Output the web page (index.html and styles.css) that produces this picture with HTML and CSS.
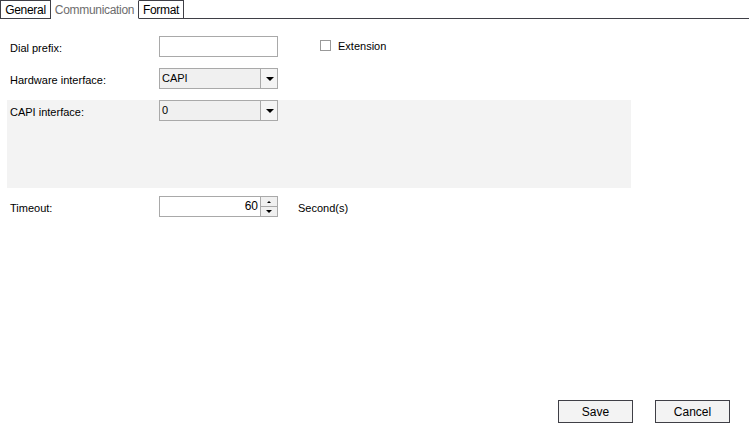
FILE: index.html
```html
<!DOCTYPE html>
<html lang="en">
<head>
  <meta charset="UTF-8">
  <title>Communication settings</title>
  <link rel="stylesheet" href="styles.css">
</head>
<body>
  <div class="page">
    <div class="tabs">
      <div class="tab tab-general">General</div>
      <div class="tab tab-comm active">Communication</div>
      <div class="tab tab-format">Format</div>
      <div class="tab-fill"></div>
    </div>

    <div class="form">
      <div class="row row-first">
        <label class="label">Dial prefix:</label>
        <input class="textbox" type="text">
        <div class="check">
          <span class="box"></span>
          <span>Extension</span>
        </div>
      </div>

      <div class="row">
        <label class="label">Hardware interface:</label>
        <div class="combo">
          <span class="combo-value">CAPI</span>
          <span class="combo-btn"><span class="arrow"></span></span>
        </div>
      </div>

      <div class="panel">
        <label class="label">CAPI interface:</label>
        <div class="combo">
          <span class="combo-value">0</span>
          <span class="combo-btn"><span class="arrow"></span></span>
        </div>
      </div>

      <div class="row row-timeout">
        <label class="label">Timeout:</label>
        <div class="spin">
          <span class="spin-value">60</span>
          <span class="spin-btns">
            <span class="spin-up"><span class="tri-up"></span></span>
            <span class="spin-down"><span class="tri-down"></span></span>
          </span>
        </div>
        <span class="unit">Second(s)</span>
      </div>
    </div>

    <div class="actions">
      <button class="btn" type="button">Save</button>
      <button class="btn" type="button">Cancel</button>
    </div>
  </div>
</body>
</html>
```

FILE: styles.css
```css
body {
  margin: 0;
  font-family: 'Liberation Sans', Arial, sans-serif;
  font-size: 11px;
  color: #000;
  background: #fff;
}

.page {
  height: 437px;
  display: flex;
  flex-direction: column;
}

/* tab strip */
.tabs {
  display: flex;
  height: 19px;
}

.tab {
  height: 19px;
  line-height: 18px;
  text-align: center;
  border: 1px solid #3f3f46;
  box-sizing: border-box;
  background: #fff;
  font-size: 12px;
  letter-spacing: -0.3px;
}

.tab + .tab {
  border-left: none;
}

.tab-general {
  width: 51px;
}

.tab-comm {
  width: 88px;
}

.tab-format {
  width: 45px;
}

.tab.active {
  color: #6d6d6d;
  border-color: transparent;
  border-right: 1px solid #3f3f46;
}

.tab-fill {
  flex: 1;
  border-bottom: 1px solid #3f3f46;
}

/* form rows */
.form {
  display: flex;
  flex-direction: column;
}

.row {
  display: flex;
  align-items: center;
  height: 21px;
  padding-left: 10px;
  margin-bottom: 11px;
}

.row-first {
  margin-top: 17px;
}

.label {
  width: 149px;
  flex: none;
  padding-top: 2px;
}

.textbox {
  width: 119px;
  height: 21px;
  margin: 0;
  padding: 0 3px;
  border: 1px solid #a9a9a9;
  box-sizing: border-box;
  font: inherit;
}

.check {
  display: flex;
  align-items: center;
  margin-left: 42px;
  margin-top: -2px;
}

.box {
  width: 11px;
  height: 11px;
  border: 1px solid #999;
  box-sizing: border-box;
  margin-right: 7px;
}

.combo {
  display: flex;
  width: 119px;
  height: 21px;
  border: 1px solid #a9a9a9;
  box-sizing: border-box;
  background: #f0f0f0;
}

.combo-value {
  flex: 1;
  padding-left: 2px;
  line-height: 19px;
}

.combo-btn {
  width: 16px;
  border-left: 1px solid #a9a9a9;
  background: #f4f4f4;
  display: flex;
  align-items: center;
  justify-content: center;
}

.arrow {
  width: 0;
  height: 0;
  border-left: 4px solid transparent;
  border-right: 4px solid transparent;
  border-top: 4px solid #000;
  margin-left: 1px;
}

/* grey group panel */
.panel {
  display: flex;
  align-items: flex-start;
  margin-left: 7px;
  width: 624px;
  height: 88px;
  padding-left: 3px;
  box-sizing: border-box;
  background: #f3f3f3;
  margin-bottom: 8px;
}

.panel .label {
  line-height: 21px;
  padding-top: 2px;
}

/* numeric spinner */
.spin {
  display: flex;
  width: 119px;
  height: 21px;
  border: 1px solid #a9a9a9;
  box-sizing: border-box;
  background: #fff;
}

.spin-value {
  flex: 1;
  text-align: right;
  padding-right: 2px;
  line-height: 19px;
  font-size: 12px;
}

.spin-btns {
  width: 16px;
  display: flex;
  flex-direction: column;
  border-left: 1px solid #a9a9a9;
}

.spin-up,
.spin-down {
  flex: 1;
  background: #f0f0f0;
  display: flex;
  align-items: center;
  justify-content: center;
}

.spin-up {
  border-bottom: 1px solid #a9a9a9;
}

.tri-up {
  border-left: 2px solid transparent;
  border-right: 2px solid transparent;
  border-bottom: 2px solid #000;
}

.tri-down {
  border-left: 3px solid transparent;
  border-right: 3px solid transparent;
  border-top: 3px solid #000;
}

.unit {
  margin-left: 20px;
  padding-top: 2px;
}

/* bottom buttons */
.actions {
  margin-top: auto;
  display: flex;
  justify-content: flex-end;
  gap: 22px;
  padding: 0 19px 14px 0;
}

.btn {
  width: 75px;
  height: 23px;
  margin: 0;
  padding: 0;
  border: 1px solid #3f3f46;
  background: #f3f3f3;
  font: inherit;
  font-size: 12px;
  color: #000;
}
```
